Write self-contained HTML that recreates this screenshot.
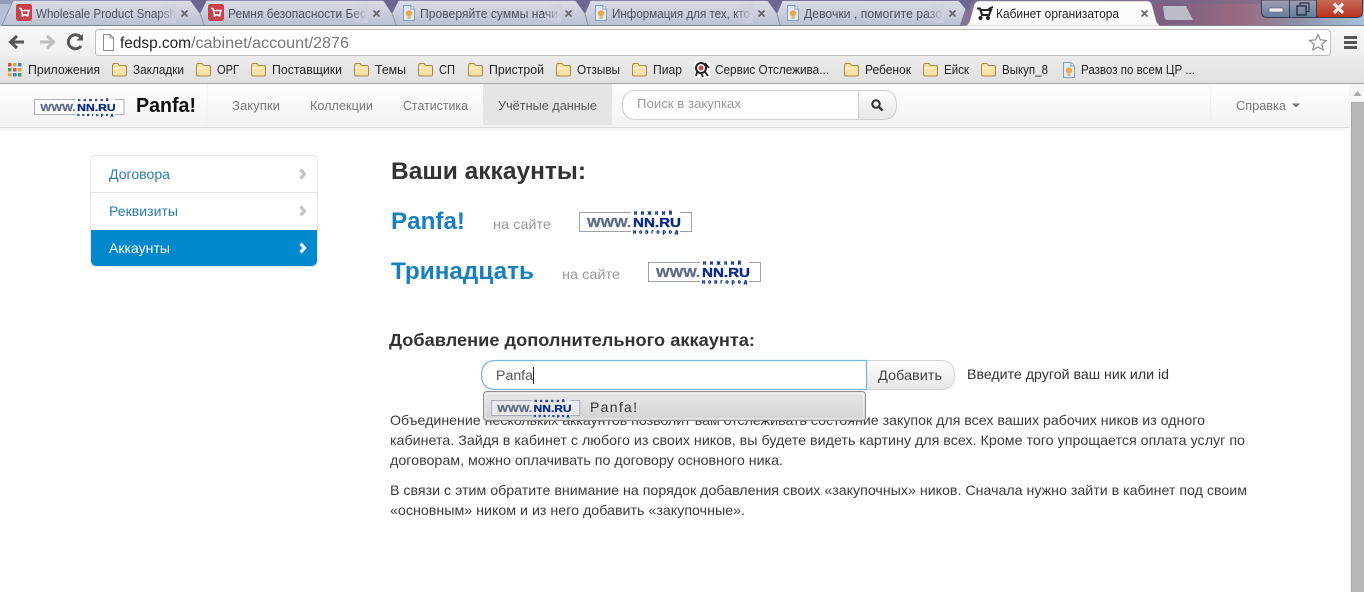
<!DOCTYPE html>
<html lang="ru"><head><meta charset="utf-8"><title>Кабинет организатора</title>
<style>
html,body{margin:0;padding:0;background:#fff;overflow:hidden;width:1364px;height:592px}
svg{display:block}
text{font-family:"Liberation Sans","Noto Sans CJK SC",sans-serif;white-space:pre}
.w{font-size:13px;font-weight:700;fill:#626c88;stroke:#626c88;stroke-width:.35}
.n{font-size:13px;font-weight:700;fill:#0b2a82;stroke:#0b2a82;stroke-width:.35}
.d{font-size:5px;font-weight:700;fill:#0b2a82;stroke:#0b2a82;stroke-width:.4}
</style></head><body>
<svg xmlns="http://www.w3.org/2000/svg" width="1364" height="592" viewBox="0 0 1364 592">
<defs>
<linearGradient id="win" x1="0" x2="1" y1="0" y2="0"><stop offset="0" stop-color="#b5c0d6"/><stop offset=".5" stop-color="#8f8fb0"/><stop offset=".86" stop-color="#7d5f82"/><stop offset=".91" stop-color="#9a6a80"/><stop offset=".95" stop-color="#8f8ea8"/><stop offset="1" stop-color="#a6c4da"/></linearGradient>
<linearGradient id="tab" x1="0" x2="0" y1="0" y2="1"><stop offset="0" stop-color="#d9dbe6"/><stop offset="1" stop-color="#bcc1d4"/></linearGradient>
<linearGradient id="tb" x1="0" x2="0" y1="0" y2="1"><stop offset="0" stop-color="#f8f8f8"/><stop offset="1" stop-color="#efefef"/></linearGradient>
<linearGradient id="bm" x1="0" x2="0" y1="0" y2="1"><stop offset="0" stop-color="#ececec"/><stop offset="1" stop-color="#e0e0e0"/></linearGradient>
<linearGradient id="nav" x1="0" x2="0" y1="0" y2="1"><stop offset="0" stop-color="#fff"/><stop offset="1" stop-color="#f2f2f2"/></linearGradient>
<linearGradient id="btn" x1="0" x2="0" y1="0" y2="1"><stop offset="0" stop-color="#fff"/><stop offset="1" stop-color="#e6e6e6"/></linearGradient>
<linearGradient id="dd" x1="0" x2="0" y1="0" y2="1"><stop offset="0" stop-color="#e6e6e6"/><stop offset=".5" stop-color="#dedede"/><stop offset="1" stop-color="#d2d2d2"/></linearGradient>
<linearGradient id="wc" x1="0" x2="0" y1="0" y2="1"><stop offset="0" stop-color="#a49fb2"/><stop offset="1" stop-color="#5f7c9c"/></linearGradient>
<linearGradient id="wr" x1="0" x2="0" y1="0" y2="1"><stop offset="0" stop-color="#c96a58"/><stop offset="1" stop-color="#b83222"/></linearGradient>
<linearGradient id="fade" x1="0" x2="1" y1="0" y2="0"><stop offset="0" stop-color="#cdd0de" stop-opacity="0"/><stop offset="1" stop-color="#cdd0de"/></linearGradient>
<g id="folder"><path d="M.5 3.5Q.5 1.5 2.5 1.5H6L7.5 3.5H13Q14.5 3.5 14.5 5V12.5Q14.5 14 13 14H2Q.5 14 .5 12.5Z" fill="#f9e2a8" stroke="#a98a4c"/><path d="M1.5 6H13.5" stroke="#fff6d8"/></g>
<g id="doc"><path d="M2.5.5H10L13.5 4V15.5H2.5Z" fill="#e2eaf6" stroke="#7f9cc4"/><path d="M10 .5V4H13.5" fill="#fff" stroke="#7f9cc4"/><circle cx="8" cy="8.500" r="3.200" fill="#e9a94e"/><path d="M6.500 11H9.500V14H6.500Z" fill="#e3b870"/></g>
<g id="red"><rect width="16" height="17" rx="2.500" fill="#c9404c"/><path d="M3 4.500H5L6.500 11H12L13 6.500H5.500M6.500 11V13M11.500 11V13" fill="none" stroke="#fff" stroke-width="1.500"/></g>
<g id="x"><path d="M.5 .5L6.500 6.500M6.500 .5L.5 6.500" stroke="#666" stroke-width="1.700" fill="none"/></g>
</defs>

<!-- window frame -->
<rect width="1364" height="26" fill="url(#win)"/>
<path d="M0 0H1364V4H0Z" fill="#6c6a90" opacity=".45"/>
<!-- inactive tabs -->
<path d="M2 25L13 1H968L960 25Z" fill="url(#tab)"/>
<path d="M190 0H207L200 14Z M383 0H399L392 14Z M575 0H591L585 14Z M767 0H783L777 14Z M958 0H972L968 12Z" fill="#6a6790"/>
<path d="M200 13L204 25M392 13L396 25M585 13L588 25M777 13L780 25" stroke="#8c90aa" fill="none"/>
<path d="M2 25L13 1" stroke="#8c97b0" fill="none"/>
<path d="M1 25.500H1364" stroke="#82828f"/>
<!-- active tab -->
<path d="M964 26Q968 26 970 20L974 5Q975 1 980 1H1147Q1151 1 1152 5L1156 20Q1158 26 1162 26Z" fill="#fbfbfb" stroke="#8b8b98" stroke-width=".6"/>
<!-- new-tab button -->
<path d="M1163 6H1186L1193 20H1168Q1165 20 1164.500 17Z" fill="#bcbcc8"/>

<use href="#red" x="16" y="4"/><use href="#red" x="208" y="4"/>
<use href="#doc" x="401" y="5"/><use href="#doc" x="593" y="5"/><use href="#doc" x="785" y="5"/>
<g font-size="12.500" fill="#4e5160">
<text x="36" y="18" textLength="140" lengthAdjust="spacingAndGlyphs">Wholesale Product Snapsh</text>
<text x="228" y="18" textLength="138" lengthAdjust="spacingAndGlyphs">Ремня безопасности Бес</text>
<text x="420" y="18" textLength="138" lengthAdjust="spacingAndGlyphs">Проверяйте суммы начи</text>
<text x="612" y="18" textLength="138" lengthAdjust="spacingAndGlyphs">Информация для тех, кто</text>
<text x="804" y="18" textLength="138" lengthAdjust="spacingAndGlyphs">Девочки , помогите разо</text>
</g>
<rect x="158" y="4" width="18" height="19" fill="url(#fade)"/><rect x="350" y="4" width="18" height="19" fill="url(#fade)"/><rect x="543" y="4" width="18" height="19" fill="url(#fade)"/><rect x="735" y="4" width="18" height="19" fill="url(#fade)"/><rect x="926" y="4" width="18" height="19" fill="url(#fade)"/>
<use href="#x" x="181" y="10"/><use href="#x" x="373" y="10"/><use href="#x" x="565" y="10"/><use href="#x" x="758" y="10"/><use href="#x" x="949" y="10"/><use href="#x" x="1141" y="10"/>
<path d="M977 8.500H980L982 15H989L991 10H981M993 7Q990 8 988 10" fill="none" stroke="#222" stroke-width="2"/><circle cx="980.500" cy="18" r="2" fill="#222"/><circle cx="988" cy="18" r="2" fill="#222"/>
<text x="996" y="18" font-size="12.500" fill="#222" textLength="123" lengthAdjust="spacingAndGlyphs">Кабинет организатора</text>

<!-- window controls -->
<path d="M1261.500 0V12Q1261.500 17.500 1267 17.500H1357Q1362.500 17.500 1362.500 12V0Z" fill="url(#wc)" stroke="#3a3b4a"/>
<path d="M1316.500 0V17H1357Q1362 17 1362 12V0Z" fill="url(#wr)"/>
<path d="M1289.500 0V17M1316.500 0V17" stroke="#3a3b4a"/>
<rect x="1269" y="8" width="14" height="4" rx="1" fill="#e8e8ee" stroke="#555a6c" stroke-width=".6"/>
<rect x="1297" y="6" width="9" height="9" fill="none" stroke="#2f3444" stroke-width="1.500"/><path d="M1300 5V3H1309V11.500H1306.500" fill="none" stroke="#2f3444" stroke-width="1.200"/>
<path d="M1334 3.500L1343 13M1343 3.500L1334 13" stroke="#f6efe9" stroke-width="3.200"/>

<!-- toolbar -->
<rect y="26" width="1364" height="30" fill="url(#tb)"/>
<path d="M24 42H11M17 36L10.500 42L17 48" fill="none" stroke="#555" stroke-width="3"/>
<path d="M40 42H53M47 36L53.500 42L47 48" fill="none" stroke="#bdbdbd" stroke-width="3"/>
<path d="M81 46A7 7 0 1 1 81.300 38" fill="none" stroke="#555" stroke-width="3"/><path d="M76.500 40.500H83V34Z" fill="#555"/>
<rect x="95.500" y="29.500" width="1235" height="26" rx="3" fill="#fff" stroke="#bdbdbd"/>
<path d="M103.500 34.500H110L113.500 38V50.500H103.500ZM110 34.500V38H113.500" fill="#fff" stroke="#8d8d8d"/>
<text x="120" y="48" font-size="16" fill="#222" textLength="71" lengthAdjust="spacingAndGlyphs">fedsp.com</text>
<text x="191" y="48" font-size="16" fill="#777" textLength="158" lengthAdjust="spacingAndGlyphs">/cabinet/account/2876</text>
<path d="M1318 34.500L1320.400 39.800L1326.300 40.400L1321.900 44.300L1323.200 50L1318 47.100L1312.800 50L1314.100 44.300L1309.700 40.400L1315.600 39.800Z" fill="#fff" stroke="#8b8b8b" stroke-width="1.200"/>
<path d="M1344 37.500H1357M1344 42.500H1357M1344 47.500H1357" stroke="#555" stroke-width="3"/>

<!-- bookmarks bar -->
<rect y="56" width="1364" height="28" fill="url(#bm)"/>
<rect y="83" width="1364" height="1" fill="#a8a8a8"/>
<g>
<rect x="8" y="63" width="3.500" height="3.500" fill="#d9534a"/><rect x="13" y="63" width="3.500" height="3.500" fill="#e0a93a"/><rect x="18" y="63" width="3.500" height="3.500" fill="#4a80d0"/>
<rect x="8" y="68" width="3.500" height="3.500" fill="#4aa05a"/><rect x="13" y="68" width="3.500" height="3.500" fill="#d9534a"/><rect x="18" y="68" width="3.500" height="3.500" fill="#e0a93a"/>
<rect x="8" y="73" width="3.500" height="3.500" fill="#e0a93a"/><rect x="13" y="73" width="3.500" height="3.500" fill="#4a80d0"/><rect x="18" y="73" width="3.500" height="3.500" fill="#4aa05a"/>
</g>
<use href="#folder" x="112" y="62"/><use href="#folder" x="196" y="62"/><use href="#folder" x="251" y="62"/><use href="#folder" x="354" y="62"/><use href="#folder" x="418" y="62"/><use href="#folder" x="468" y="62"/><use href="#folder" x="556" y="62"/><use href="#folder" x="632" y="62"/><use href="#folder" x="844" y="62"/><use href="#folder" x="923" y="62"/><use href="#folder" x="981" y="62"/>
<rect x="694" y="62" width="16" height="16" fill="#fff"/><circle cx="701" cy="68" r="5" fill="none" stroke="#222" stroke-width="2"/><circle cx="701" cy="68" r="2.500" fill="#c44"/><path d="M705 63L709 68M705 72L708 76M701 73L703 77M697 72L696 76" stroke="#222" stroke-width="1.800"/>
<use href="#doc" x="1061" y="62"/>
<g font-size="12.500" fill="#222">
<text x="28" y="74" textLength="72" lengthAdjust="spacingAndGlyphs">Приложения</text>
<text x="133" y="74" textLength="51" lengthAdjust="spacingAndGlyphs">Закладки</text>
<text x="217" y="74" textLength="22" lengthAdjust="spacingAndGlyphs">ОРГ</text>
<text x="272" y="74" textLength="70" lengthAdjust="spacingAndGlyphs">Поставщики</text>
<text x="375" y="74" textLength="31" lengthAdjust="spacingAndGlyphs">Темы</text>
<text x="439" y="74" textLength="16" lengthAdjust="spacingAndGlyphs">СП</text>
<text x="489" y="74" textLength="55" lengthAdjust="spacingAndGlyphs">Пристрой</text>
<text x="577" y="74" textLength="43" lengthAdjust="spacingAndGlyphs">Отзывы</text>
<text x="653" y="74" textLength="29" lengthAdjust="spacingAndGlyphs">Пиар</text>
<text x="715" y="74" textLength="114" lengthAdjust="spacingAndGlyphs">Сервис Отслежива...</text>
<text x="865" y="74" textLength="46" lengthAdjust="spacingAndGlyphs">Ребенок</text>
<text x="944" y="74" textLength="25" lengthAdjust="spacingAndGlyphs">Ейск</text>
<text x="1002" y="74" textLength="46" lengthAdjust="spacingAndGlyphs">Выкуп_8</text>
<text x="1081" y="74" textLength="114" lengthAdjust="spacingAndGlyphs">Развоз по всем ЦР ...</text>
</g>

<!-- site nav -->
<rect y="84" width="1349" height="43" fill="url(#nav)"/>
<rect y="127" width="1349" height="1" fill="#dcdcdc"/>
<rect y="128" width="1349" height="3" fill="#f8f8f8"/>
<path d="M207 84V125M1210.500 84V125" stroke="#f0f0f0"/>
<rect x="483" y="84" width="129" height="41" fill="#e5e5e5"/>
<g transform="translate(34 99) scale(.8)">
<rect x=".5" y=".5" width="112" height="19" fill="#fbfbfb" stroke="#9aa0ac"/><rect x="52" y="-2" width="49" height="4" fill="#fff"/><rect x="52" y="18" width="49" height="4" fill="#fff"/>
<text class="w" x="8" y="15" textLength="44" lengthAdjust="spacingAndGlyphs">WWW.</text><text class="n" x="54" y="15" textLength="48" lengthAdjust="spacingAndGlyphs">NN.RU</text>
<text class="d" x="55" y="2.500" textLength="38">нижний</text><text class="d" x="54" y="21.500" textLength="45">новгород</text>
</g>
<text x="136" y="112" font-size="20" font-weight="700" fill="#111" textLength="60" lengthAdjust="spacingAndGlyphs">Panfa!</text>
<g font-size="13" fill="#777">
<text x="232" y="110" textLength="48" lengthAdjust="spacingAndGlyphs">Закупки</text>
<text x="310" y="110" textLength="63" lengthAdjust="spacingAndGlyphs">Коллекции</text>
<text x="403" y="110" textLength="65" lengthAdjust="spacingAndGlyphs">Статистика</text>
<text x="498" y="110" fill="#555" textLength="99" lengthAdjust="spacingAndGlyphs">Учётные данные</text>
<text x="1236" y="110" textLength="50" lengthAdjust="spacingAndGlyphs">Справка</text>
</g>
<path d="M1292 103.500H1300L1296 107.500Z" fill="#777"/>
<path d="M858 90.500H883Q896.500 90.500 896.500 105Q896.500 119.500 883 119.500H858Z" fill="url(#btn)" stroke="#cfcfcf"/>
<path d="M858.500 90.500H636Q622.500 90.500 622.500 105Q622.500 119.500 636 119.500H858.500Z" fill="#fff" stroke="#cfcfcf"/>
<text x="637" y="108" font-size="13" fill="#999" textLength="104" lengthAdjust="spacingAndGlyphs">Поиск в закупках</text>
<circle cx="876" cy="104" r="3.700" fill="none" stroke="#333" stroke-width="2"/><path d="M879 107L882.500 110.500" stroke="#333" stroke-width="2.500"/>

<!-- scrollbar -->
<rect x="1349" y="84" width="15" height="508" fill="#f5f5f5"/>
<path d="M1353.500 96L1357.500 91L1361.500 96Z" fill="#a8a8a8"/>
<rect x="1351.500" y="102.500" width="13" height="490" fill="#b8b8b8" stroke="#a6a6a6"/>

<!-- sidebar -->
<rect x="90.500" y="155.500" width="227" height="111" rx="5" fill="#fff" stroke="#e5e5e5"/>
<path d="M91 192.500H317" stroke="#e5e5e5"/>
<path d="M91 230H317V260Q317 266 311 266H97Q91 266 91 260Z" fill="#0088cc"/>
<text x="109" y="179" font-size="14" fill="#2b7cb0" textLength="61" lengthAdjust="spacingAndGlyphs">Договора</text>
<text x="109" y="216" font-size="14" fill="#2b7cb0" textLength="69" lengthAdjust="spacingAndGlyphs">Реквизиты</text>
<text x="109" y="253" font-size="14" fill="#fff" textLength="61" lengthAdjust="spacingAndGlyphs">Аккаунты</text>
<path d="M300.500 169.500L304.500 174L300.500 178.500" fill="none" stroke="#c4c4c4" stroke-width="3.200"/>
<path d="M300.500 206.500L304.500 211L300.500 215.500" fill="none" stroke="#c4c4c4" stroke-width="3.200"/>
<path d="M300.500 243.500L304.500 248L300.500 252.500" fill="none" stroke="#fff" stroke-width="3.200"/>

<!-- main -->
<text x="391" y="179" font-size="24" font-weight="700" fill="#333" textLength="195" lengthAdjust="spacingAndGlyphs">Ваши аккаунты:</text>
<text x="391" y="229" font-size="24.500" font-weight="700" fill="#1a80bd" textLength="74" lengthAdjust="spacingAndGlyphs">Panfa!</text>
<text x="493" y="229" font-size="14" fill="#999" textLength="58" lengthAdjust="spacingAndGlyphs">на сайте</text>
<g transform="translate(579 212)">
<rect x=".5" y=".5" width="112" height="19" fill="#fff" stroke="#9aa0ac"/><rect x="52" y="-2" width="49" height="4" fill="#fff"/><rect x="52" y="18" width="49" height="4" fill="#fff"/>
<text class="w" x="8" y="15" textLength="44" lengthAdjust="spacingAndGlyphs">WWW.</text><text class="n" x="54" y="15" textLength="48" lengthAdjust="spacingAndGlyphs">NN.RU</text>
<text class="d" x="55" y="2.500" textLength="38">нижний</text><text class="d" x="54" y="21.500" textLength="45">новгород</text>
</g>
<text x="391" y="279" font-size="24.500" font-weight="700" fill="#1a80bd" textLength="143" lengthAdjust="spacingAndGlyphs">Тринадцать</text>
<text x="562" y="279" font-size="14" fill="#999" textLength="58" lengthAdjust="spacingAndGlyphs">на сайте</text>
<g transform="translate(648 262)">
<rect x=".5" y=".5" width="112" height="19" fill="#fff" stroke="#9aa0ac"/><rect x="52" y="-2" width="49" height="4" fill="#fff"/><rect x="52" y="18" width="49" height="4" fill="#fff"/>
<text class="w" x="8" y="15" textLength="44" lengthAdjust="spacingAndGlyphs">WWW.</text><text class="n" x="54" y="15" textLength="48" lengthAdjust="spacingAndGlyphs">NN.RU</text>
<text class="d" x="55" y="2.500" textLength="38">нижний</text><text class="d" x="54" y="21.500" textLength="45">новгород</text>
</g>
<text x="389" y="346" font-size="17.500" font-weight="700" fill="#333" textLength="366" lengthAdjust="spacingAndGlyphs">Добавление дополнительного аккаунта:</text>

<g font-size="14" fill="#3c3c3c">
<text x="390" y="425" textLength="815" lengthAdjust="spacingAndGlyphs">Объединение нескольких аккаунтов позволит вам отслеживать состояние закупок для всех ваших рабочих ников из одного</text>
<text x="390" y="445" textLength="855" lengthAdjust="spacingAndGlyphs">кабинета. Зайдя в кабинет с любого из своих ников, вы будете видеть картину для всех. Кроме того упрощается оплата услуг по</text>
<text x="390" y="465" textLength="393" lengthAdjust="spacingAndGlyphs">договорам, можно оплачивать по договору основного ника.</text>
<text x="390" y="495" textLength="857" lengthAdjust="spacingAndGlyphs">В связи с этим обратите внимание на порядок добавления своих «закупочных» ников. Сначала нужно зайти в кабинет под своим</text>
<text x="390" y="515" textLength="355" lengthAdjust="spacingAndGlyphs">«основным» ником и из него добавить «закупочные».</text>
</g>

<path d="M866 360.500H940Q954.500 360.500 954.500 375Q954.500 389.500 940 389.500H866Z" fill="url(#btn)" stroke="#d2d2d2"/>
<text x="878" y="380" font-size="14" fill="#444" textLength="64" lengthAdjust="spacingAndGlyphs">Добавить</text>
<path d="M866.500 360.500H496Q481.500 360.500 481.500 375Q481.500 389.500 496 389.500H866.500Z" fill="#fff" stroke="#79b8e6" stroke-width="1.300"/>
<text x="496" y="380" font-size="14" fill="#555" textLength="37" lengthAdjust="spacingAndGlyphs">Panfa</text>
<path d="M533.500 367V384" stroke="#222"/>
<text x="967" y="379" font-size="14" fill="#333" textLength="202" lengthAdjust="spacingAndGlyphs">Введите другой ваш ник или id</text>

<!-- autocomplete dropdown -->
<rect x="483.500" y="391.500" width="382" height="29" rx="3" fill="url(#dd)" stroke="#8f8f8f"/>
<rect x="485.500" y="393.500" width="378" height="25" rx="2" fill="none" stroke="#f2f2f2" opacity=".6"/>
<g transform="translate(491 400) scale(.79)">
<rect x=".5" y=".5" width="112" height="19" fill="#e9e9e9" stroke="#9aa0ac"/><rect x="52" y="-2" width="49" height="4" fill="#e2e2e2"/><rect x="52" y="18" width="49" height="4" fill="#e2e2e2"/>
<text class="w" x="8" y="15" textLength="44" lengthAdjust="spacingAndGlyphs">WWW.</text><text class="n" x="54" y="15" textLength="48" lengthAdjust="spacingAndGlyphs">NN.RU</text>
<text class="d" x="55" y="2.500" textLength="38">нижний</text><text class="d" x="54" y="21.500" textLength="45">новгород</text>
</g>
<text x="590" y="412" font-size="14" fill="#333" textLength="47">Panfa!</text>
</svg>
</body></html>
